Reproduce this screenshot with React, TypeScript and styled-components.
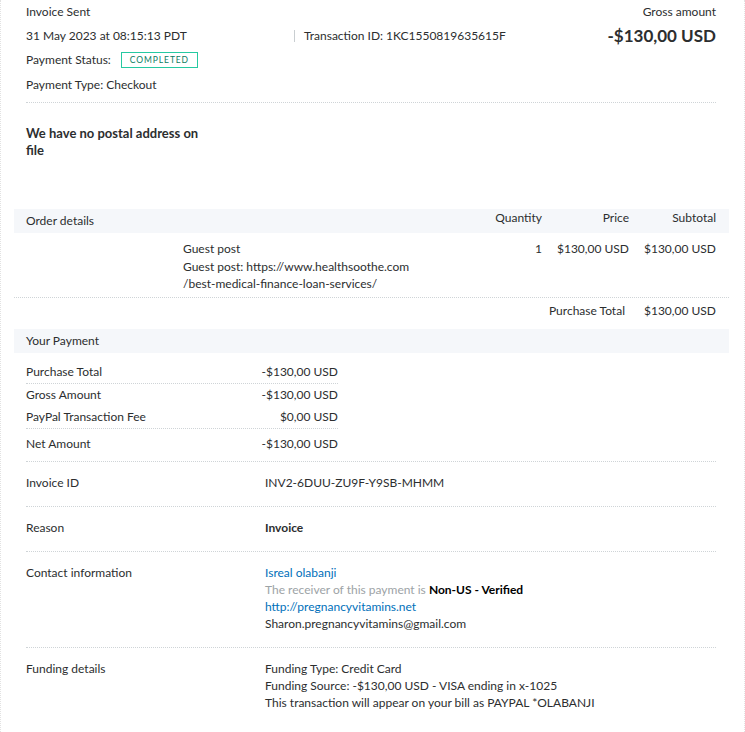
import React from "react";
import styled, { createGlobalStyle } from "styled-components";

const Global = createGlobalStyle`
  html, body { margin: 0; padding: 0; background: #fff; }
  body {
    font-family: Lato, "Open Sans", "Liberation Sans", sans-serif;
    font-size: 12px;
    color: #2c2e2f;
  }
`;

const Page = styled.div`
  width: 745px;
  box-sizing: border-box;
  padding: 0 15px 20px 13px;
  border-left: 1px dotted #e2e2e2;
  border-right: 1px dotted #e2e2e2;
  min-height: 732px;
`;

const Section = styled.div`
  padding: 0 13px 0 12px;
`;

const Header = styled(Section)`
  display: flex;
  align-items: flex-start;
`;

const HeaderCol = styled.div<{ $width?: number; $offset?: number }>`
  display: flex;
  flex-direction: column;
  ${(p) => (p.$width ? `width: ${p.$width}px;` : "flex: 1;")}
  padding-top: ${(p) => p.$offset ?? 0}px;
`;

const Line = styled.div`
  height: 24px;
  line-height: 24px;
  white-space: nowrap;
  display: flex;
  align-items: center;
`;

const TxnId = styled.span`
  border-left: 1px solid #c9ced1;
  padding-left: 9px;
  line-height: 12px;
`;

const RightCol = styled.div`
  display: flex;
  flex-direction: column;
  align-items: flex-end;
`;

const BigAmount = styled.div`
  font-size: 17px;
  font-weight: 700;
  line-height: 24px;
  height: 24px;
  color: #2c2e2f;
`;

const Badge = styled.span`
  margin-left: 10px;
  border: 1px solid #26c9a1;
  color: #0b7c5f;
  font-size: 8.5px;
  letter-spacing: 0.9px;
  height: 14px;
  line-height: 14px;
  padding: 0 8px;
`;

const Divider = styled.div`
  border-bottom: 1px dotted #cfd4d7;
  margin: 5px 13px 0 12px;
`;

const Address = styled(Section)`
  padding-top: 22px;
  height: 84px;
  font-size: 13px;
  font-weight: 700;
  line-height: 17px;
`;

const AddressText = styled.div`
  width: 185px;
`;

const Bar = styled.div<{ $grid?: boolean }>`
  background: #f5f7fa;
  height: 24px;
  line-height: 24px;
  padding: 0 13px 0 12px;
  ${(p) =>
    p.$grid
      ? `display: grid; grid-template-columns: 157px 1fr 70px 87px 87px;`
      : ""}
`;

const Cell = styled.div<{ $right?: boolean; $span?: number; $raise?: boolean }>`
  text-align: ${(p) => (p.$right ? "right" : "left")};
  ${(p) => (p.$span ? `grid-column: span ${p.$span};` : "")}
  ${(p) => (p.$raise ? "line-height: 17px;" : "")}
`;

const ItemRow = styled.div`
  display: grid;
  grid-template-columns: 157px 1fr 70px 87px 87px;
  padding: 7px 13px 4px 12px;
  line-height: 17.5px;
  border-bottom: 1px dotted #cfd4d7;
`;

const TotalRow = styled.div`
  display: flex;
  justify-content: flex-end;
  padding: 4px 13px 10px 12px;
  line-height: 17px;
  gap: 19px;
`;

const PayList = styled.div`
  width: 312px;
  margin: 8px 0 6px 12px;
`;

const PayRow = styled.div<{ $rule?: boolean; $gap?: number }>`
  display: flex;
  justify-content: space-between;
  line-height: 16px;
  padding: 3px 0;
  margin-bottom: ${(p) => p.$gap ?? 0}px;
  ${(p) => (p.$rule ? "border-bottom: 1px dotted #cfd4d7;" : "")}
`;

const DetailRow = styled.div`
  display: grid;
  grid-template-columns: 239px 1fr;
  margin: 0 13px 0 12px;
  padding: 12px 0 15px;
  line-height: 17px;
  border-top: 1px dotted #cfd4d7;
`;

const Value = styled.div<{ $bold?: boolean }>`
  font-weight: ${(p) => (p.$bold ? 700 : 400)};
`;

const LinkText = styled.div`
  color: #0070ba;
`;

const Muted = styled.div`
  color: #9da3a6;
  b { color: #000; font-weight: 700; }
`;

export default function App() {
  return (
    <>
      <Global />
      <Page>
        <Header>
          <HeaderCol $width={268}>
            <Line>Invoice Sent</Line>
            <Line>31 May 2023 at 08:15:13 PDT</Line>
            <Line>
              Payment Status:<Badge>COMPLETED</Badge>
            </Line>
            <Line style={{ marginTop: 1 }}>Payment Type: Checkout</Line>
          </HeaderCol>
          <HeaderCol $offset={24}>
            <Line>
              <TxnId>Transaction ID: 1KC1550819635615F</TxnId>
            </Line>
          </HeaderCol>
          <RightCol>
            <Line>Gross amount</Line>
            <BigAmount>-$130,00 USD</BigAmount>
          </RightCol>
        </Header>
        <Divider />

        <Address>
          <AddressText>We have no postal address on file</AddressText>
        </Address>

        <Bar $grid>
          <Cell $span={2}>Order details</Cell>
          <Cell $right $raise>Quantity</Cell>
          <Cell $right $raise>Price</Cell>
          <Cell $right $raise>Subtotal</Cell>
        </Bar>
        <ItemRow>
          <div />
          <div>
            Guest post
            <br />
            Guest post: https://www.healthsoothe.com
            <br />
            /best-medical-finance-loan-services/
          </div>
          <Cell $right>1</Cell>
          <Cell $right>$130,00 USD</Cell>
          <Cell $right>$130,00 USD</Cell>
        </ItemRow>
        <TotalRow>
          <span>Purchase Total</span>
          <span>$130,00 USD</span>
        </TotalRow>

        <Bar>Your Payment</Bar>
        <PayList>
          <PayRow $rule>
            <span>Purchase Total</span>
            <span>-$130,00 USD</span>
          </PayRow>
          <PayRow>
            <span>Gross Amount</span>
            <span>-$130,00 USD</span>
          </PayRow>
          <PayRow $rule $gap={4}>
            <span>PayPal Transaction Fee</span>
            <span>$0,00 USD</span>
          </PayRow>
          <PayRow>
            <span>Net Amount</span>
            <span>-$130,00 USD</span>
          </PayRow>
        </PayList>

        <DetailRow>
          <div>Invoice ID</div>
          <Value>INV2-6DUU-ZU9F-Y9SB-MHMM</Value>
        </DetailRow>
        <DetailRow>
          <div>Reason</div>
          <Value $bold>Invoice</Value>
        </DetailRow>
        <DetailRow>
          <div>Contact information</div>
          <Value>
            <LinkText>Isreal olabanji</LinkText>
            <Muted>
              The receiver of this payment is <b>Non-US - Verified</b>
            </Muted>
            <LinkText>http://pregnancyvitamins.net</LinkText>
            <div>Sharon.pregnancyvitamins@gmail.com</div>
          </Value>
        </DetailRow>
        <DetailRow>
          <div>Funding details</div>
          <Value>
            <div>Funding Type: Credit Card</div>
            <div>Funding Source: -$130,00 USD - VISA ending in x-1025</div>
            <div>This transaction will appear on your bill as PAYPAL *OLABANJI</div>
          </Value>
        </DetailRow>
      </Page>
    </>
  );
}
